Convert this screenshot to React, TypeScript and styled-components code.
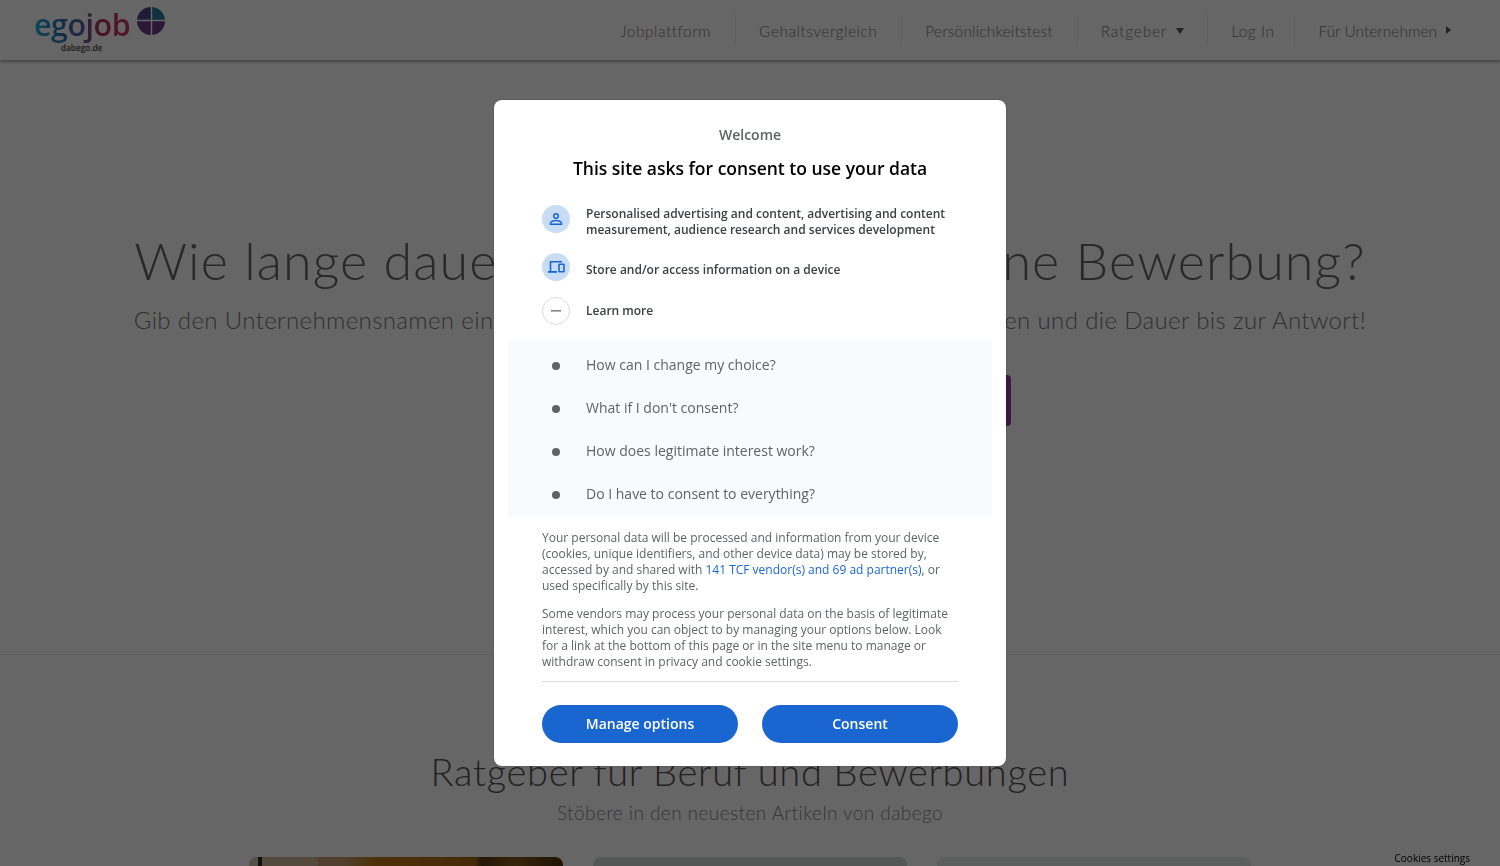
import React from "react";
import styled, { createGlobalStyle } from "styled-components";

const GlobalStyle = createGlobalStyle`
  html, body {
    margin: 0;
    padding: 0;
    height: 100%;
    overflow: hidden;
    background: #fff;
  }
`;

const Page = styled.div`
  height: 866px;
  overflow: hidden;
  font-family: "Lato", sans-serif;
  color: #555;
`;

const Header = styled.header`
  height: 60px;
  display: flex;
  align-items: center;
  justify-content: space-between;
  padding: 0 25px 0 34px;
  background: #fff;
  box-shadow: 0 1px 4px rgba(0, 0, 0, 0.5);
  position: relative;
`;

const Logo = styled.div`
  display: flex;
  flex-direction: column;
  align-self: flex-start;
  padding-top: 4px;
`;

const LogoTop = styled.div`
  display: flex;
  align-items: flex-start;
  gap: 6px;
`;

const LogoWord = styled.span`
  font-family: "Open Sans", sans-serif;
  font-size: 30.5px;
  font-weight: 600;
  line-height: 40px;
  letter-spacing: -0.5px;
  background: linear-gradient(90deg, #20b4d8 0%, #2a78b8 25%, #5a5aa8 50%, #c02a60 72%, #c83a68 100%);
  -webkit-background-clip: text;
  background-clip: text;
  color: transparent;
`;

const LogoSub = styled.span`
  font-family: "Open Sans", sans-serif;
  font-size: 8.2px;
  font-weight: 600;
  line-height: 10px;
  color: #444;
  margin: -1px 0 0 27px;
`;

const Nav = styled.nav`
  display: flex;
  align-items: center;
`;

const NavItem = styled.a<{ $divider?: boolean; $track?: number; $padRight?: number }>`
  display: flex;
  align-items: center;
  height: 30px;
  padding: 2px ${(p) => p.$padRight ?? 24}px 0 24px;
  font-size: 15.5px;
  font-weight: 300;
  letter-spacing: ${(p) => p.$track ?? 0.5}px;
  color: #777;
  box-shadow: ${(p) => (p.$divider ? "1px 0 0 #f0f0f0" : "none")};
`;

const CaretDown = styled.span`
  width: 0;
  height: 0;
  margin-left: 9px;
  border-left: 4px solid transparent;
  border-right: 4px solid transparent;
  border-top: 6px solid #555;
  margin-right: -1px;
`;

const CaretRight = styled.span`
  width: 0;
  height: 0;
  margin-left: 9px;
  margin-top: -2px;
  border-top: 4px solid transparent;
  border-bottom: 4px solid transparent;
  border-left: 5px solid #555;
`;

const Hero = styled.section`
  padding: 170px 0 228px;
  border-bottom: 1px solid #eee;
  display: flex;
  flex-direction: column;
  align-items: center;
`;

const HeroTitle = styled.h1`
  margin: 0;
  font-size: 52px;
  line-height: 60px;
  font-weight: 300;
  letter-spacing: 1.1px;
  white-space: nowrap;
  color: #666;
`;

const HeroSub = styled.p`
  margin: 15px 0 0;
  font-size: 24px;
  line-height: 30px;
  font-weight: 300;
  letter-spacing: 0.37px;
  white-space: nowrap;
  color: #777;
`;

const SearchRow = styled.div`
  width: 522px;
  height: 51px;
  margin-top: 40px;
  display: flex;
  justify-content: flex-end;
`;

const SearchButton = styled.button`
  width: 130px;
  border: none;
  border-radius: 4px;
  background: #9a3aa8;
  color: #fff;
  font: 400 16px "Lato", sans-serif;
`;

const Articles = styled.section`
  padding-top: 93px;
  display: flex;
  flex-direction: column;
  align-items: center;
`;

const ArticlesTitle = styled.h2`
  margin: 0;
  font-size: 38px;
  line-height: 46px;
  font-weight: 300;
  letter-spacing: 0.7px;
  color: #555;
`;

const ArticlesSub = styled.p`
  margin: 6px 0 0;
  font-size: 19px;
  line-height: 26px;
  font-weight: 300;
  letter-spacing: 0.43px;
  color: #888;
`;

const Cards = styled.div`
  margin-top: 31px;
  display: grid;
  grid-template-columns: repeat(3, 314px);
  gap: 30px;
`;

const Card = styled.div<{ $bg: string }>`
  height: 180px;
  border-radius: 8px;
  background: ${(p) => p.$bg};
`;

const CookieLink = styled.a`
  position: fixed;
  right: 30px;
  bottom: 0;
  font-family: "Open Sans", sans-serif;
  font-size: 10px;
  line-height: 16px;
  color: #000;
`;

const Overlay = styled.div`
  position: fixed;
  inset: 0;
  background: rgba(0, 0, 0, 0.6);
  display: flex;
  align-items: center;
  justify-content: center;
`;

const Dialog = styled.div`
  width: 512px;
  height: 666px;
  box-sizing: border-box;
  padding-top: 25px;
  background: #fff;
  border-radius: 8px;
  font-family: "Open Sans", sans-serif;
  box-shadow: 0 0 2px rgba(0, 0, 0, 0.3);
`;

const Welcome = styled.div`
  font-size: 14px;
  line-height: 20px;
  font-weight: 600;
  color: #5f6368;
  text-align: center;
`;

const Title = styled.h1`
  margin: 11px 0 0;
  font-size: 17.5px;
  line-height: 24px;
  font-weight: 600;
  color: #000;
  text-align: center;
`;

const Purposes = styled.div`
  margin: 25px 48px 0;
  display: flex;
  flex-direction: column;
  gap: 16px;
`;

const Row = styled.div`
  display: flex;
  align-items: flex-start;
  gap: 16px;
`;

const IconCircle = styled.span<{ $outline?: boolean }>`
  flex: none;
  width: 28px;
  height: 28px;
  box-sizing: border-box;
  border-radius: 50%;
  display: flex;
  align-items: center;
  justify-content: center;
  background: ${(p) => (p.$outline ? "#fff" : "#c9dcf6")};
  border: ${(p) => (p.$outline ? "1px solid #dadce0" : "none")};
`;

const PurposeText = styled.span<{ $top?: number }>`
  font-size: 12px;
  line-height: 16px;
  font-weight: 600;
  color: #3c4043;
  padding-top: ${(p) => p.$top ?? 1}px;
  margin-bottom: -1px;
`;

const Faq = styled.div`
  margin: 15px 14px 0;
  padding: 3px 0 2px 34px;
  background: #f9fafb;
`;

const FaqRow = styled.div`
  height: 43px;
  display: flex;
  align-items: center;
  gap: 16px;
  font-size: 14px;
  color: #5f6368;
`;

const DotBox = styled.span`
  flex: none;
  width: 28px;
  display: flex;
  justify-content: center;
`;

const Dot = styled.span`
  width: 8px;
  height: 8px;
  margin-top: 2px;
  border-radius: 50%;
  background: #5f6368;
`;

const Body = styled.div`
  margin: 13px 48px 0;
  display: flex;
  flex-direction: column;
  gap: 12px;
`;

const Para = styled.p`
  margin: 0;
  font-size: 12px;
  line-height: 16px;
  color: #5f6368;
`;

const VendorLink = styled.a`
  color: #1a66d1;
`;

const Rule = styled.div`
  margin: 11px 48px 0;
  height: 1px;
  background: #dadce0;
`;

const Actions = styled.div`
  margin: 23px 48px 0;
  display: grid;
  grid-template-columns: 1fr 1fr;
  gap: 24px;
`;

const ActionButton = styled.button`
  height: 38px;
  padding: 0 0 2px;
  border: none;
  border-radius: 19px;
  background: #1a66d1;
  color: #fff;
  font-family: "Open Sans", sans-serif;
  font-size: 14px;
  font-weight: 600;
`;

const faqs = [
  "How can I change my choice?",
  "What if I don't consent?",
  "How does legitimate interest work?",
  "Do I have to consent to everything?",
];

const woodCard =
  "linear-gradient(90deg, #cfc8b8 0 3%, #302820 3% 4%, #d0b898 4% 22%, #c8a070 22% 30%, #c27a18 40%, #b06a14 72%, #5a3a14 74%, #8a5a18 85%, #4a3010 100%)";

const LogoMark = () => (
  <svg width="30" height="30" viewBox="0 0 30 30" style={{ marginTop: 3 }}>
    <path d="M1 14A14 14 0 0 1 15 0V14Z" fill="#4a4488" />
    <path d="M15 0A14 14 0 0 1 29 14H15Z" fill="#2a7c9c" />
    <path d="M1 14A14 14 0 0 0 29 14Z" fill="#6c3a8c" />
    <path d="M15.5 0V28M1 13.5H29" stroke="#fff" strokeWidth="1.4" />
  </svg>
);

const PersonIcon = () => (
  <svg width="14" height="14" viewBox="0 0 14 14" fill="none" stroke="#1a66d1" strokeWidth="1.5">
    <circle cx="7" cy="4" r="2.3" />
    <path d="M1.5 12.3v-1.2c0-1.3 2.6-2.7 5.5-2.7s5.5 1.4 5.5 2.7v1.2Z" />
  </svg>
);

const DevicesIcon = () => (
  <svg width="17" height="14" viewBox="0 0 17 14" fill="none" stroke="#1a66d1" strokeWidth="1.6">
    <path d="M2.5 11V1.7H14" />
    <path d="M0 11.9H9" strokeWidth="1.8" />
    <rect x="11" y="4.2" width="5" height="7.6" rx="0.6" />
  </svg>
);

const MinusIcon = () => (
  <svg width="10" height="2" viewBox="0 0 10 2">
    <rect width="10" height="1.6" fill="#80868b" />
  </svg>
);

export default function App() {
  return (
    <>
      <GlobalStyle />
      <Page>
        <Header>
          <Logo>
            <LogoTop>
              <LogoWord>egojob</LogoWord>
              <LogoMark />
            </LogoTop>
            <LogoSub>dabego.de</LogoSub>
          </Logo>
          <Nav>
            <NavItem $divider>Jobplattform</NavItem>
            <NavItem $divider>Gehaltsvergleich</NavItem>
            <NavItem $divider $track={0.18}>Persönlichkeitstest</NavItem>
            <NavItem $divider $track={0.8}>
              Ratgeber
              <CaretDown />
            </NavItem>
            <NavItem $divider $padRight={20}>Log In</NavItem>
            <NavItem $track={0}>
              Für Unternehmen
              <CaretRight />
            </NavItem>
          </Nav>
        </Header>

        <Hero>
          <HeroTitle>Wie lange dauert die Antwort auf deine Bewerbung?</HeroTitle>
          <HeroSub>Gib den Unternehmensnamen ein und lies Erfahrungen von anderen Bewerberinnen und die Dauer bis zur Antwort!</HeroSub>
          <SearchRow>
            <SearchButton>Suchen</SearchButton>
          </SearchRow>
        </Hero>

        <Articles>
          <ArticlesTitle>Ratgeber für Beruf und Bewerbungen</ArticlesTitle>
          <ArticlesSub>Stöbere in den neuesten Artikeln von dabego</ArticlesSub>
          <Cards>
            <Card $bg={woodCard} />
            <Card $bg="#d4dad8" />
            <Card $bg="#e8ecec" />
          </Cards>
        </Articles>

        <CookieLink>Cookies settings</CookieLink>
      </Page>

      <Overlay>
        <Dialog>
          <Welcome>Welcome</Welcome>
          <Title>This site asks for consent to use your data</Title>
          <Purposes>
            <Row>
              <IconCircle>
                <PersonIcon />
              </IconCircle>
              <PurposeText>
                Personalised advertising and content, advertising and content measurement, audience research and services development
              </PurposeText>
            </Row>
            <Row>
              <IconCircle>
                <DevicesIcon />
              </IconCircle>
              <PurposeText $top={9}>Store and/or access information on a device</PurposeText>
            </Row>
            <Row>
              <IconCircle $outline>
                <MinusIcon />
              </IconCircle>
              <PurposeText $top={6}>Learn more</PurposeText>
            </Row>
          </Purposes>
          <Faq>
            {faqs.map((q) => (
              <FaqRow key={q}>
                <DotBox>
                  <Dot />
                </DotBox>
                {q}
              </FaqRow>
            ))}
          </Faq>
          <Body>
            <Para>
              Your personal data will be processed and information from your device (cookies, unique identifiers, and other device data) may be stored by, accessed by and shared with <VendorLink>141 TCF vendor(s) and 69 ad partner(s)</VendorLink>, or used specifically by this site.
            </Para>
            <Para>
              Some vendors may process your personal data on the basis of legitimate interest, which you can object to by managing your options below. Look for a link at the bottom of this page or in the site menu to manage or withdraw consent in privacy and cookie settings.
            </Para>
          </Body>
          <Rule />
          <Actions>
            <ActionButton>Manage options</ActionButton>
            <ActionButton>Consent</ActionButton>
          </Actions>
        </Dialog>
      </Overlay>
    </>
  );
}
